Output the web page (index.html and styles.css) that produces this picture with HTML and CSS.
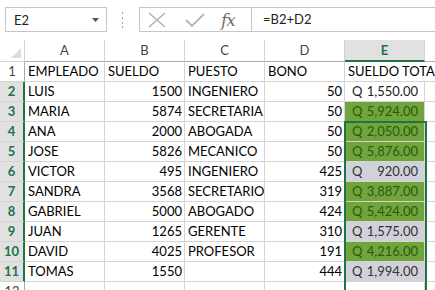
FILE: index.html
```html
<!DOCTYPE html>
<html lang="es">
<head>
    <meta charset="UTF-8">
    <title>Sueldos</title>
    <link rel="stylesheet" href="styles.css">
</head>
<body>

    <!-- Formula bar -->
    <div class="toolbar">
        <div class="namebox">
            <span>E2</span>
            <svg width="7" height="4" viewBox="0 0 7 4"><path d="M0 0h7L3.5 4z" fill="#555"/></svg>
        </div>
        <svg class="grip" width="3" height="16" viewBox="0 0 3 16">
            <rect x="1" y="0" width="1" height="2" fill="#a0a0a0"/>
            <rect x="1" y="5" width="1" height="2" fill="#a0a0a0"/>
            <rect x="1" y="10" width="1" height="2" fill="#a0a0a0"/>
            <rect x="1" y="14" width="1" height="2" fill="#a0a0a0"/>
        </svg>
        <div class="fbar">
            <div class="fbtns">
                <svg width="20" height="16" viewBox="0 0 20 16"><path d="M2 1L18 15M18 1L2 15" stroke="#b4b4b4" stroke-width="1.6" fill="none"/></svg>
                <svg width="20" height="14" viewBox="0 0 20 14"><path d="M1 7L7 13L19 1" stroke="#b4b4b4" stroke-width="1.8" fill="none"/></svg>
                <span class="fx">fx</span>
            </div>
            <div class="formula">=B2+D2</div>
        </div>
    </div>

    <!-- Sheet -->
    <div class="sheet">
        <div class="corner"><span class="tri"></span></div>
        <div class="colhead">A</div>
        <div class="colhead">B</div>
        <div class="colhead">C</div>
        <div class="colhead">D</div>
        <div class="colhead sel">E</div>
        <div class="colhead last"></div>

        <div class="rowhead">1</div>
        <div class="cell">EMPLEADO</div>
        <div class="cell">SUELDO</div>
        <div class="cell">PUESTO</div>
        <div class="cell">BONO</div>
        <div class="cell over">SUELDO TOTAL</div>
        <div class="cell last"></div>

        <div class="rowhead sel">2</div>
        <div class="cell">LUIS</div>
        <div class="cell num">1500</div>
        <div class="cell">INGENIERO</div>
        <div class="cell num">50</div>
        <div class="cell money"><span>Q</span><span>1,550.00</span></div>
        <div class="cell last"></div>

        <div class="rowhead sel">3</div>
        <div class="cell">MARIA</div>
        <div class="cell num">5874</div>
        <div class="cell">SECRETARIA</div>
        <div class="cell num">50</div>
        <div class="cell money good"><span>Q</span><span>5,924.00</span></div>
        <div class="cell last"></div>

        <div class="rowhead sel">4</div>
        <div class="cell">ANA</div>
        <div class="cell num">2000</div>
        <div class="cell">ABOGADA</div>
        <div class="cell num">50</div>
        <div class="cell money good"><span>Q</span><span>2,050.00</span></div>
        <div class="cell last"></div>

        <div class="rowhead sel">5</div>
        <div class="cell">JOSE</div>
        <div class="cell num">5826</div>
        <div class="cell">MECANICO</div>
        <div class="cell num">50</div>
        <div class="cell money good"><span>Q</span><span>5,876.00</span></div>
        <div class="cell last"></div>

        <div class="rowhead sel">6</div>
        <div class="cell">VICTOR</div>
        <div class="cell num">495</div>
        <div class="cell">INGENIERO</div>
        <div class="cell num">425</div>
        <div class="cell money shade"><span>Q</span><span>920.00</span></div>
        <div class="cell last"></div>

        <div class="rowhead sel">7</div>
        <div class="cell">SANDRA</div>
        <div class="cell num">3568</div>
        <div class="cell">SECRETARIO</div>
        <div class="cell num">319</div>
        <div class="cell money good"><span>Q</span><span>3,887.00</span></div>
        <div class="cell last"></div>

        <div class="rowhead sel">8</div>
        <div class="cell">GABRIEL</div>
        <div class="cell num">5000</div>
        <div class="cell">ABOGADO</div>
        <div class="cell num">424</div>
        <div class="cell money good"><span>Q</span><span>5,424.00</span></div>
        <div class="cell last"></div>

        <div class="rowhead sel">9</div>
        <div class="cell">JUAN</div>
        <div class="cell num">1265</div>
        <div class="cell">GERENTE</div>
        <div class="cell num">310</div>
        <div class="cell money shade"><span>Q</span><span>1,575.00</span></div>
        <div class="cell last"></div>

        <div class="rowhead sel">10</div>
        <div class="cell">DAVID</div>
        <div class="cell num">4025</div>
        <div class="cell">PROFESOR</div>
        <div class="cell num">191</div>
        <div class="cell money good"><span>Q</span><span>4,216.00</span></div>
        <div class="cell last"></div>

        <div class="rowhead sel">11</div>
        <div class="cell">TOMAS</div>
        <div class="cell num">1550</div>
        <div class="cell"></div>
        <div class="cell num">444</div>
        <div class="cell money shade"><span>Q</span><span>1,994.00</span></div>
        <div class="cell last"></div>

        <div class="rowhead">12</div>
        <div class="cell"></div>
        <div class="cell"></div>
        <div class="cell"></div>
        <div class="cell"></div>
        <div class="cell"></div>
        <div class="cell last"></div>

        <!-- selected range E2:E11 -->
        <div class="selection"><span class="handle"></span></div>
    </div>

</body>
</html>
```

FILE: styles.css
```css
/* General */
body {
    margin: 0;
    background: #fff;
    font-family: Lato, "Open Sans", sans-serif;
    font-size: 13px;
    color: #000;
    width: 435px;
    height: 290px;
    overflow: hidden;
}

/* Formula bar */
.toolbar {
    display: flex;
    align-items: center;
    height: 40px;
    padding-bottom: 1px;
    box-sizing: border-box;
}
.namebox {
    margin-left: 5px;
    width: 102px;
    height: 25px;
    border: 1px solid #c6c6c6;
    box-sizing: border-box;
    display: flex;
    align-items: center;
    justify-content: space-between;
    padding: 0 7px 0 8px;
    color: #222;
}
.grip {
    margin-left: 14px;
}
.fbar {
    margin-left: 15px;
    flex: 1;
    height: 25px;
    border: 1px solid #c6c6c6;
    border-right: none;
    box-sizing: border-box;
    display: flex;
}
.fbtns {
    width: 112px;
    display: flex;
    align-items: center;
    padding-left: 7px;
    box-sizing: border-box;
    border-right: 1px solid #c6c6c6;
    gap: 18px;
}
.fx {
    font-family: "DejaVu Serif", "Liberation Serif", serif;
    font-style: italic;
    font-size: 17px;
    color: #6e6e6e;
    margin-left: -2px;
    letter-spacing: -1px;
}
.formula {
    padding-left: 11px;
    line-height: 23px;
    color: #222;
}

/* Sheet grid */
.sheet {
    position: relative;
    display: grid;
    grid-template-columns: 25px 80px 80px 80px 80px 80px 80px;
    grid-template-rows: 22px repeat(12, 20px);
}
.corner, .colhead, .rowhead, .cell {
    box-sizing: border-box;
    border-right: 1px solid #d4d4d4;
    border-bottom: 1px solid #d4d4d4;
    white-space: nowrap;
}
.corner {
    position: relative;
}
.tri {
    position: absolute;
    right: 3px;
    bottom: 3px;
    width: 0;
    height: 0;
    border-left: 10px solid transparent;
    border-bottom: 10px solid #dcdcdc;
}
.colhead {
    text-align: center;
    line-height: 21px;
    color: #444;
    border-bottom-color: #ababab;
}
.colhead.sel {
    background: #e1e1e1;
    color: #217346;
    font-weight: bold;
    border-bottom: 2px solid #217346;
    line-height: 20px;
}
.rowhead {
    text-align: center;
    line-height: 19px;
    color: #444;
    border-right-color: #ababab;
}
.rowhead.sel {
    background: #e1e1e1;
    color: #217346;
    font-weight: bold;
    border-right: 2px solid #217346;
}
.cell {
    line-height: 19px;
    padding: 0 2px 0 3px;
    overflow: hidden;
}
.cell.num {
    text-align: right;
}
.cell.over {
    overflow: visible;
    border-right: none;
    position: relative;
    z-index: 1;
}
.cell.money {
    display: flex;
    justify-content: space-between;
    padding: 0 6px 0 7px;
    color: #222;
}
.cell.good {
    background: #72a43c;
    color: #265b10;
}
.cell.shade {
    background: #d1d1d9;
    color: #333;
}

/* Selection outline */
.selection {
    position: absolute;
    left: 344px;
    top: 81px;
    width: 83px;
    height: 203px;
    border: 2px solid #217346;
    box-sizing: border-box;
}
.handle {
    position: absolute;
    right: -5px;
    bottom: -5px;
    width: 5px;
    height: 5px;
    background: #217346;
    border: 1px solid #fff;
}
```
